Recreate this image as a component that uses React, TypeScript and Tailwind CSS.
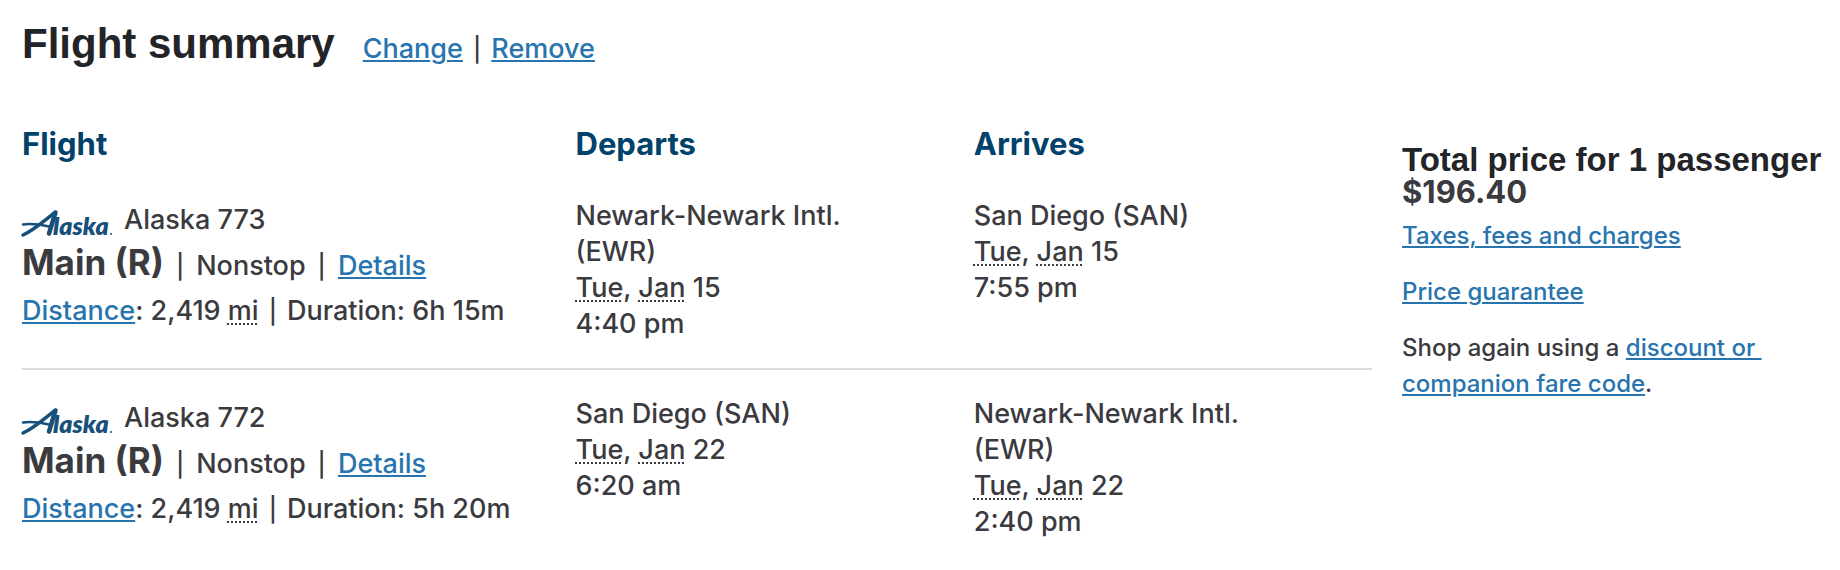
import type { ReactNode } from "react";

type Stop = { place: string; day: string; month: string; date: string; time: string };

type Flight = {
  number: string;
  cabin: string;
  miles: string;
  duration: string;
  departs: Stop;
  arrives: Stop;
};

const flights: Flight[] = [
  {
    number: "773",
    cabin: "Main (R)",
    miles: "2,419",
    duration: "6h 15m",
    departs: { place: "Newark-Newark Intl. (EWR)", day: "Tue", month: "Jan", date: "15", time: "4:40 pm" },
    arrives: { place: "San Diego (SAN)", day: "Tue", month: "Jan", date: "15", time: "7:55 pm" },
  },
  {
    number: "772",
    cabin: "Main (R)",
    miles: "2,419",
    duration: "5h 20m",
    departs: { place: "San Diego (SAN)", day: "Tue", month: "Jan", date: "22", time: "6:20 am" },
    arrives: { place: "Newark-Newark Intl. (EWR)", day: "Tue", month: "Jan", date: "22", time: "2:40 pm" },
  },
];

const TextLink = ({ children }: { children: ReactNode }) => (
  <a href="#" className="text-[#2774ae] underline decoration-2 underline-offset-2">
    {children}
  </a>
);

const Abbr = ({ title, children }: { title: string; children: ReactNode }) => (
  <abbr title={title} className="underline decoration-dotted decoration-2 underline-offset-3">
    {children}
  </abbr>
);

const Bar = () => <span className="text-[24px]">|</span>;

const AlaskaLogo = () => (
  <svg
    viewBox="0 -3 90 30"
    className="h-[30px] w-[90px] shrink-0 self-end overflow-visible"
    role="img"
    aria-label="Alaska Airlines"
  >
    {/* swept A */}
    <g fill="none" stroke="#17507a" strokeLinecap="round">
      <path d="M1 24 C12 19 23 9 33 1.5" strokeWidth="3.5" />
      <path d="M33.5 1.5 L27 22.5" strokeWidth="4.5" />
      <path d="M1 13.5 C9 12.5 18 13.5 27 15.5" strokeWidth="2.5" />
    </g>
    <text x="31" y="24" fill="#17507a" fontFamily="Lato, sans-serif" fontSize="25" fontWeight="800" fontStyle="italic">
      laska
    </text>
    <circle cx="89" cy="23" r="1" fill="#17507a" />
  </svg>
);

const StopCell = ({ stop }: { stop: Stop }) => (
  <td className="py-[26px] pr-24 align-top leading-9">
    <div>{stop.place}</div>
    <div>
      <Abbr title="Tuesday">{stop.day}</Abbr>, <Abbr title="January">{stop.month}</Abbr> {stop.date}
    </div>
    <div>{stop.time}</div>
  </td>
);

const FlightRow = ({ flight }: { flight: Flight }) => (
  <tr className="border-b-2 border-[#dbdbdb] last:border-b-0">
    <td className="pt-[30px] align-top whitespace-nowrap">
      <div className="flex h-9 items-center gap-3">
        <AlaskaLogo />
        <span>Alaska {flight.number}</span>
      </div>
      <div className="flex items-baseline gap-3 leading-[48px]">
        <strong className="text-[35px] font-bold">{flight.cabin}</strong>
        <Bar />
        <span>Nonstop</span>
        <Bar />
        <TextLink>Details</TextLink>
      </div>
      <div className="flex items-baseline gap-2.5 leading-10">
        <span>
          <TextLink>Distance</TextLink>: {flight.miles} <Abbr title="miles">mi</Abbr>
        </span>
        <Bar />
        <span>Duration: {flight.duration}</span>
      </div>
    </td>
    <StopCell stop={flight.departs} />
    <StopCell stop={flight.arrives} />
  </tr>
);

const FlightSummary = () => {
  return (
    <main className="min-h-screen bg-white px-[22px] pt-5 font-['Inter',sans-serif] text-[27px] font-[450] text-[#3a3a3f]">
      {/* Title */}
      <header className="flex items-baseline gap-7">
        <h1 className="font-['Liberation_Sans',sans-serif] text-[42px] leading-12 font-bold text-[#222427]">
          Flight summary
        </h1>
        <nav className="flex items-baseline gap-2.5 leading-8">
          <TextLink>Change</TextLink>
          <Bar />
          <TextLink>Remove</TextLink>
        </nav>
      </header>

      <div className="mt-14 flex items-start gap-[30px]">
        {/* Flights */}
        <table className="flex-1 table-fixed border-collapse text-left">
          <thead>
            <tr className="text-[31px] leading-10 text-[#01426a]">
              <th className="w-[41%] pb-2 font-bold">Flight</th>
              <th className="pb-2 font-bold">Departs</th>
              <th className="pb-2 font-bold">Arrives</th>
            </tr>
          </thead>
          <tbody>
            {flights.map((flight) => (
              <FlightRow key={flight.number} flight={flight} />
            ))}
          </tbody>
        </table>

        {/* Price */}
        <aside className="w-[416px] shrink-0 pt-5 text-[24px] leading-9 font-medium">
          <h2 className="font-['Liberation_Sans',sans-serif] text-[33px] leading-8 font-bold whitespace-nowrap text-[#222427]">
            Total price for 1 passenger
          </h2>
          <p className="text-[31px] leading-8 font-bold">$196.40</p>
          <p className="mt-2.5">
            <TextLink>Taxes, fees and charges</TextLink>
          </p>
          <p className="mt-5">
            <TextLink>Price guarantee</TextLink>
          </p>
          <p className="mt-5">
            Shop again using a <TextLink>discount or&nbsp; companion fare code</TextLink>.
          </p>
        </aside>
      </div>
    </main>
  );
};

const App = () => <FlightSummary />;

export default App;
